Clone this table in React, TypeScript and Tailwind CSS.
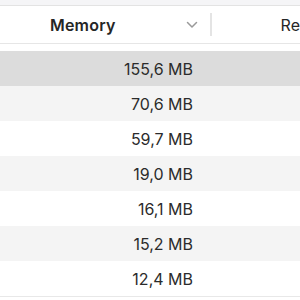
const rows = [
  { value: "155,6 MB", bg: "bg-[#dcdcdc]" },
  { value: "70,6 MB", bg: "bg-[#f4f4f4]" },
  { value: "59,7 MB", bg: "bg-white" },
  { value: "19,0 MB", bg: "bg-[#f4f4f4]" },
  { value: "16,1 MB", bg: "bg-white" },
  { value: "15,2 MB", bg: "bg-[#f4f4f4]" },
  { value: "12,4 MB", bg: "bg-white" },
];

export default function App() {
  return (
    <div
      className="w-[300px] h-[300px] overflow-hidden bg-white text-[#262626]"
      style={{ fontFamily: "Inter, 'Liberation Sans', sans-serif" }}
    >
      {/* toolbar edge */}
      <div className="h-[6px] bg-[#f5f5f7] border-b border-[#e3e3e3]" />

      {/* column header */}
      <div className="h-[38px] flex items-center border-b border-[#e6e6e6]">
        <div className="w-[210px] flex items-center pl-[50px] pr-[12px]">
          <span className="text-[16px] font-semibold tracking-[0.2px] text-[#262626]">Memory</span>
          <svg className="ml-auto" width="12" height="8" viewBox="0 0 12 8" fill="none">
            <path d="M1.5 1.5 L6 6 L10.5 1.5" stroke="#9a9a9a" strokeWidth="1.5" strokeLinecap="round" strokeLinejoin="round" />
          </svg>
        </div>
        <div className="w-[2px] h-[23px] bg-[#e4e4e4]" />
        <div className="flex-1 flex justify-end">
          <span className="text-[16px] text-[#262626] whitespace-nowrap">Re</span>
        </div>
      </div>

      <div className="h-[7px]" />

      {/* rows */}
      <div className="flex flex-col">
        {rows.map((r) => (
          <div key={r.value} className={`h-[35px] flex items-center ${r.bg}`}>
            <div className="w-[193px] text-right text-[16px] text-[#2b2b2b]">{r.value}</div>
          </div>
        ))}
      </div>
      <div className="h-px bg-[#e8e8e8]" />
    </div>
  );
}
